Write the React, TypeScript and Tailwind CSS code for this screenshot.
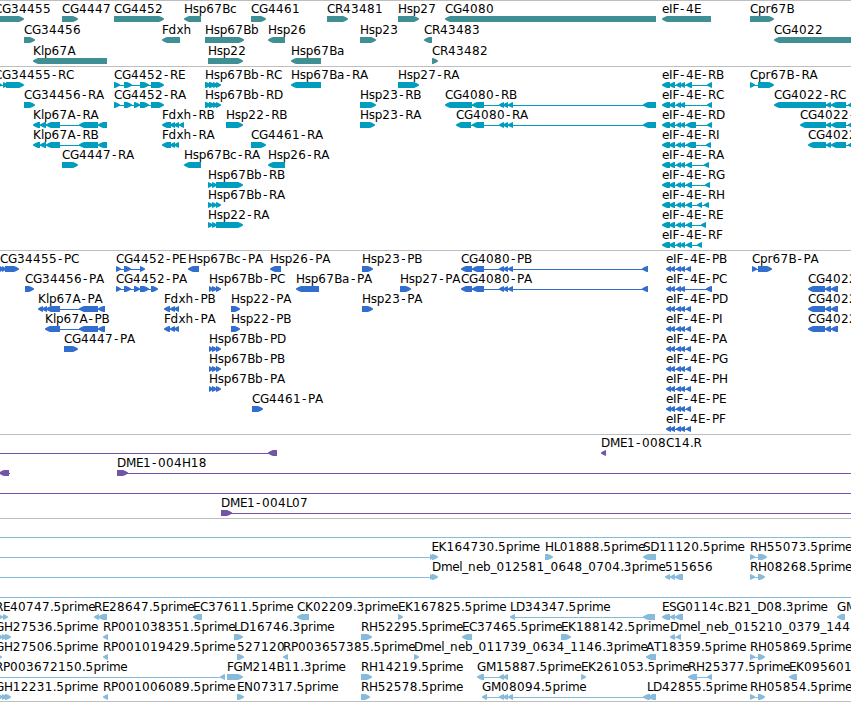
type Dir = 'L' | 'R';
type Feature = { label: string; x: number; dir: Dir; blocks: number[][] };

// Row notation: "label @labelX direction start-end,start-end", features split by ";".
// A direction of "=" stands for a bare connecting line.
const parseRow = (row: string) =>
  row
    .split(';')
    .filter((s) => s.trim())
    .map((s) => {
      const [label, x, dir, spans] = s.trim().split(' ');
      return {
        label: label === '.' ? '' : label,
        x: Number(x),
        dir: dir as Dir,
        blocks: spans.split(',').map((b) => b.split(':').map(Number)),
      } as Feature;
    });

// Pixel advances of the label face at 12px.
const ADVANCE: Record<string, number> = {
  C: 8, G: 9, R: 8, E: 7, K: 8, F: 6.5, H: 8.7, D: 9, M: 10, B: 7.8, A: 8, P: 7, S: 7.2, L: 6, T: 7, N: 9, I: 3.5,
  l: 3, i: 3, p: 7.6, s: 6, r: 5, m: 11.2, e: 7, d: 8, x: 7, h: 8, n: 8, b: 7.8, c: 7, _: 5.8, '-': 7, '.': 3.5,
};

const glyphPositions = (text: string, start: number) => {
  let x = start;
  return [...text]
    .map((ch) => {
      const at = ch === '-' ? x + 1 : x;
      x += ADVANCE[ch] ?? 8;
      return at.toFixed(1);
    })
    .join(' ');
};

const arrow = (a: number, b: number, top: number, dir: Dir) => {
  const t = Math.min(5, b - a);
  const tip = dir === 'R' ? b : a;
  const base = dir === 'R' ? a : b;
  const s = dir === 'R' ? -1 : 1;
  const inner = tip + s * t;
  const mid = tip + s * t * 0.5;
  return [
    [base, top],
    [inner, top],
    [mid, top + 1],
    [tip, top + 2.6],
    [tip, top + 3.4],
    [mid, top + 5],
    [inner, top + 6],
    [base, top + 6],
  ]
    .map((p) => p.join(','))
    .join(' ');
};

const E4 = '662:670,669:675,676:681,680:685';
const E5 = E4 + ',686:692';
const P4 = '666:671,670:675,676:681,680:685';
const P5 = P4 + ',686:691';
const INTRON = '472:484,499:504,503:508,508:513';
const BB = '205:211,209:215,213:218,216:221';
const BS = '208:213,212:217,216:221';
const PB = '209:213,212:217,216:221';
const C22 = '826:831,831:846,848:862';
const PC22 = '808:825,825:831,831:838';

const GENES = [
  'CG34455 -6 R -6:24;CG4447 62 R 62:78;CG4452 114 R 114:164;Hsp67Bc 184 L 184:201;CG4461 251 R 251:266;CR43481 327 R 327:348;Hsp27 398 R 398:419;CG4080 445 L 445:656;eIF-4E 662 L 662:711;Cpr67B 750 R 750:774',
  'CG34456 24 R 24:35;Fdxh 162 L 162:180;Hsp67Bb 205 R 205:244;Hsp26 268 L 268:285;Hsp23 360 R 360:376;CR43483 424 L 424:432;CG4022 774 L 774:862',
  'Klp67A 33 L 33:107;Hsp22 208 R 208:243;Hsp67Ba 291 L 291:321;CR43482 432 R 432:438',
];

const TRANSCRIPTS = [
  `CG34455-RC -6 R -6:2,3:8,6:24;CG4452-RE 114 R 114:120,124:132,140:149,151:164;Hsp67Bb-RC 205 R ${BB};Hsp67Ba-RA 291 L 291:321;Hsp27-RA 398 R 398:419;eIF-4E-RB 662 L ${E5},707:712;Cpr67B-RA 750 R 750:755,758:774`,
  `CG34456-RA 24 R 24:35;CG4452-RA 114 R 114:120,124:132,134:140,140:149,151:164;Hsp67Bb-RD 205 R ${BB};Hsp23-RB 360 R 360:376;CG4080-RB 445 L 445:472,${INTRON},643:656;eIF-4E-RC 662 L ${E4},707:712;CG4022-RC 774 L 774:826,${C22}`,
  `Klp67A-RA 33 L 33:40,40:46,46:60,79:98,98:107;Fdxh-RB 162 L 162:171,170:175,174:179,179:184;Hsp22-RB 226 R 226:243;Hsp23-RA 360 R 360:375;CG4080-RA 456 L 456:471,${INTRON},643:656;eIF-4E-RD 662 L ${E4},686:696,707:712;CG4022-RA 800 L 800:826,${C22}`,
  `Klp67A-RB 33 L 33:40,40:46,46:60,79:98,98:107;Fdxh-RA 162 L 162:171,170:175,174:179;CG4461-RA 251 R 251:266;eIF-4E-RI 662 L ${E4},686:696,706:711;CG4022-RB 808 L 808:826,${C22}`,
  `CG4447-RA 62 R 62:78;Hsp67Bc-RA 184 L 184:201;Hsp26-RA 268 L 268:285;eIF-4E-RA 662 L ${E5},704:709`,
  `Hsp67Bb-RB 208 R 208:213,212:217,216:243;eIF-4E-RG 662 L ${E5},705:710`,
  `Hsp67Bb-RA 208 R ${BS};eIF-4E-RH 662 L ${E5},697:702,704:709`,
  `Hsp22-RA 208 R 208:213,212:217,216:243;eIF-4E-RE 662 L ${E5},701:706`,
  `eIF-4E-RF 662 L ${E5},697:702`,
];

const PROTEINS = [
  `CG34455-PC 0 R 0:3,2:6,5:19;CG4452-PE 116 R 116:121,124:131,140:145;Hsp67Bc-PA 188 L 188:199;Hsp26-PA 270 L 270:281;Hsp23-PB 362 R 362:373;CG4080-PB 461 L 461:472,${INTRON},642:648;eIF-4E-PB 666 L ${P5};Cpr67B-PA 752 R 752:757,758:772`,
  `CG34456-PA 25 R 25:34;CG4452-PA 116 R 116:121,124:131,134:140,140:149,151:158;Hsp67Bb-PC 209 R ${PB};Hsp67Ba-PA 296 L 296:319;Hsp27-PA 400 R 400:411;CG4080-PA 461 L 461:472,${INTRON},642:648;eIF-4E-PC 666 L ${P4},706:712;CG4022-PC 808 L ${PC22}`,
  `Klp67A-PA 38 L 38:43,42:47,46:60,79:98,98:105;Fdxh-PB 164 L 164:170,170:175,174:179;Hsp22-PA 231 R 231:240;Hsp23-PA 362 R 362:373;eIF-4E-PD 666 L ${P5};CG4022-PA 808 L ${PC22}`,
  `Klp67A-PB 45 L 45:60,79:98,98:105;Fdxh-PA 164 L 164:170,170:175,174:179;Hsp22-PB 231 R 231:240;eIF-4E-PI 666 L ${P5};CG4022-PB 808 L ${PC22}`,
  `CG4447-PA 64 R 64:78;Hsp67Bb-PD 209 R ${PB};eIF-4E-PA 666 L ${P5}`,
  `Hsp67Bb-PB 209 R ${PB};eIF-4E-PG 666 L ${P5}`,
  `Hsp67Bb-PA 209 R ${PB};eIF-4E-PH 666 L ${P5}`,
  `CG4461-PA 252 R 252:263;eIF-4E-PE 666 L ${P5}`,
  `eIF-4E-PF 666 L ${P5}`,
];

const CLONES = [
  '. 0 = -5:270;. 0 L 268:277;DME1-008C14.R 601 L 601:606',
  '. 0 L -1:9;. 0 = 8:11;. 0 = 120:855;DME1-004H18 117 R 117:128',
  '. 0 = -5:855',
  '. 0 = 224:855;DME1-004L07 221 R 221:232',
];

const ESTS = [
  '. 0 = -5:855',
  '. 0 = -5:431;EK164730.5prime 431.5 R 430:434,432:438;HL01888.5prime 545 R 545:553;SD11120.5prime 643 L 643:656;RH55073.5prime 750 R 750:755,758:767',
  '. 0 = -5:431;Dmel_neb_012581_0648_0704.3prime 432 R 430:434,432:438;515656 665 L 665:670,670:675,675:683;RH08268.5prime 750 R 750:755,758:765',
  '. 0 = -5:855',
  'RE40747.5prime -5 R -6:3,3:8;RE28647.5prime 94 L 94:99,98:107;EC37611.5prime 193 L 193:202;CK02209.3prime 297 L 297:309;EK167825.5prime 398 R 398:403;LD34347.5prime 510 L 510:515,643:655;ESG0114c.B21_D08.3prime 662 L 662:670,670:675,675:683;GM01 837 L 837:845',
  'GH27536.5prime -5 R -6:3,2:7,5:11;RP001038351.5prime 103 L 103:108;LD16746.3prime 234 R 234:243;RH52295.5prime 361 R 361:372;EC37465.5prime 462 L 462:472;EK188142.5prime 561 R 561:571;Dmel_neb_015210_0379_144 670 L 670:675,676:681',
  'GH27506.5prime -5 R -6:2;RP001019429.5prime 103 L 103:108;527120 237 R 237:244;RP003657385.5prime 283 L 283:288;Dmel_neb_011739_0634_1146.3prime 414 R 414:419;AT18359.5prime 646 L 646:656;RH05869.5prime 750 R 750:755,758:765',
  '. 0 = -5:221;RP003672150.5prime -5 L 220:225;FGM214B11.3prime 227 R 227:243;RH14219.5prime 361 R 361:372;GM15887.5prime 477 L 477:484,499:504,503:508;EK261053.5prime 581 R 581:586;RH25377.5prime 688 L 688:697,707:712;EK095601 789 L 789:797',
  'GH12231.5prime -5 R -6:3,2:7,5:11;RP001006089.5prime 103 L 103:108;EN07317.5prime 237 R 237:244;RH52578.5prime 361 R 361:370;GM08094.5prime 482 L 482:487,499:504,503:508,508:513,643:650;LD42855.5prime 647 L 648:656;RH05854.5prime 750 R 750:755,758:765',
];

type TrackProps = { rows: string[]; color: string; height: number; top: number; pitch?: number };

function Track({ rows, color, height, top, pitch = 20 }: TrackProps) {
  return (
    <section className="w-full border-t border-[#bebebe]">
      <svg className="block w-full overflow-hidden" width={851} height={height - 1} viewBox={`0 1 851 ${height - 1}`}>
        {rows.map((row, r) => {
          const y = top + r * pitch;
          return parseRow(row).map((f, i) => (
            <g key={`${r}-${i}`} fill={color}>
              {(f.blocks.length > 1 || !'LR'.includes(f.dir)) && (
                <rect
                  x={f.blocks[0][0] + 1}
                  y={y + 3}
                  width={f.blocks[f.blocks.length - 1][1] - f.blocks[0][0] - 2}
                  height={1}
                />
              )}
              {'LR'.includes(f.dir) &&
                f.blocks.map(([a, b], k) => <polygon key={k} points={arrow(a, b, y, f.dir)} />)}
              {f.label && (
                <text x={glyphPositions(f.label, f.x)} y={y - 3} fill="#000">
                  {f.label}
                </text>
              )}
            </g>
          ));
        })}
      </svg>
    </section>
  );
}

export default function App() {
  return (
    <main className="flex h-[702px] w-[851px] flex-col overflow-hidden bg-white font-['DejaVu_Sans',sans-serif] text-[12px]">
      <Track rows={GENES} color="#3f8f94" height={66} top={16} pitch={21} />
      <Track rows={TRANSCRIPTS} color="#009dbf" height={184} top={16} />
      <Track rows={PROTEINS} color="#326ecd" height={184} top={16} />
      <Track rows={CLONES} color="#7354a7" height={84} top={16} />
      <Track rows={ESTS} color="#87bbdc" height={183} top={16} />
      <div className="h-px w-full shrink-0 bg-[#bebebe]" />
    </main>
  );
}
